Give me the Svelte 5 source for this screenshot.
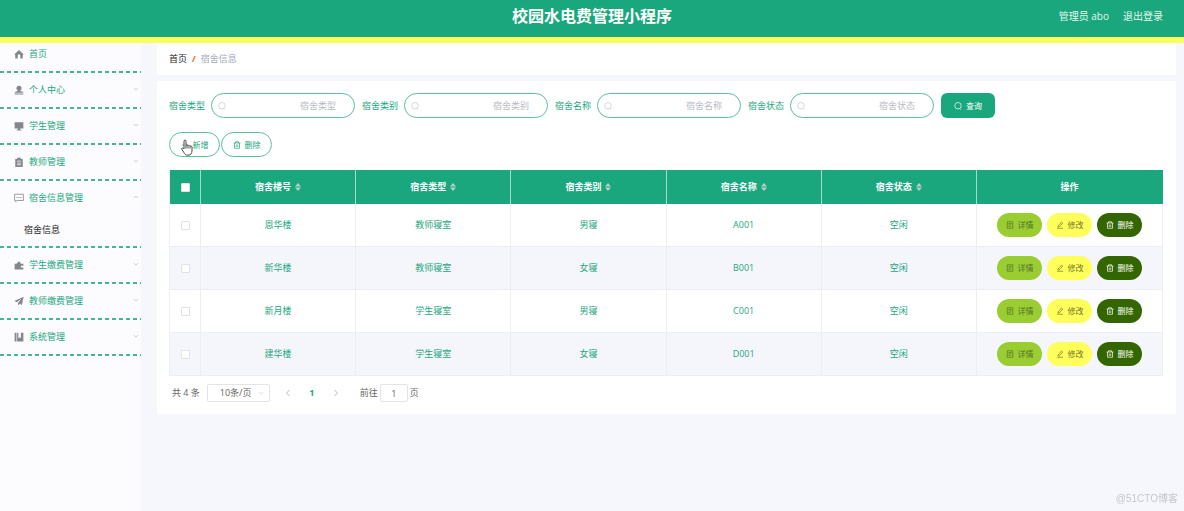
<script>
	let menus = [
		{ name: "首页", icon: "home" },
		{ name: "个人中心", icon: "user", sub: true },
		{ name: "学生管理", icon: "monitor", sub: true },
		{ name: "教师管理", icon: "clipboard", sub: true },
		{ name: "宿舍信息管理", icon: "chat", sub: true, children: ["宿舍信息"] },
		{ name: "学生缴费管理", icon: "wallet", sub: true },
		{ name: "教师缴费管理", icon: "plane", sub: true },
		{ name: "系统管理", icon: "book", sub: true },
	];

	let filters = ["宿舍类型", "宿舍类别", "宿舍名称", "宿舍状态"];
	let columns = ["宿舍楼号", "宿舍类型", "宿舍类别", "宿舍名称", "宿舍状态"];

	let rows = [
		["恩华楼", "教师寝室", "男寝", "A001", "空闲"],
		["新华楼", "教师寝室", "女寝", "B001", "空闲"],
		["新月楼", "学生寝室", "男寝", "C001", "空闲"],
		["建华楼", "学生寝室", "女寝", "D001", "空闲"],
	];

	let search = $state(["", "", "", ""]);
	let checked = $state([false, false, false, false]);
	let page = $state("1");

	function toggleAll(e) {
		checked = checked.map(() => e.target.checked);
	}
</script>

{#snippet icon(name)}
	<svg class="icon" viewBox="0 0 16 16" aria-hidden="true">
		{#if name == "home"}
			<path fill="currentColor" d="M8 1.5 0.8 8.2l1.2 1.2V15h4v-4.5a2 2 0 0 1 4 0V15h4V9.4l1.2-1.2z" />
		{:else if name == "user"}
			<circle cx="8" cy="5" r="4" fill="currentColor" />
			<path fill="currentColor" d="M6 8h4v2h2l3 1.500v1H1v-1L4 10h2zM1 13.500h14V15H1z" />
		{:else if name == "monitor"}
			<path fill="currentColor" d="M1 2h14v10H1zM6 12h4v2h2v1H4v-1h2z" />
		{:else if name == "clipboard"}
			<path fill="currentColor" fill-rule="evenodd" d="M2 3h3V1h6v2h3v13H2zM5 6v1.3h6V6zm0 3v1.3h6V9zm0 3v1.3h6V12z" />
		{:else if name == "chat"}
			<path fill="none" stroke="currentColor" stroke-width="1.3" d="M1 2h14v10H5l-2.5 2v-2H1z" />
			<path fill="currentColor" d="M4 6.5h1.6V8H4zm3.2 0h1.6V8H7.2zm3.2 0H12V8h-1.600z" />
		{:else if name == "wallet"}
			<path fill="currentColor" d="M1 6h3l4-4 3 3-1 1h5v3h-4v3h4v3H1z" />
		{:else if name == "plane"}
			<path fill="currentColor" d="M15.500 1 0.500 8l4 2L12 4l-5.500 7v4l2.500-2.500 3.500 2z" />
		{:else if name == "book"}
			<path fill="currentColor" d="M1 1h3v14H1zM5 1h2v9l2-1.500L11 10V1h4v14H5z" />
		{:else}
			<g fill="none" stroke="currentColor" stroke-width="1.4">
				{#if name == "search"}
					<circle cx="8" cy="7.500" r="6.500" /><path d="m11.500 13 2.500 2.500" />
				{:else if name == "plus"}
					<path d="M8 2v12M2 8h12" />
				{:else if name == "trash"}
					<path d="M1 4h14M5 4V1.500h6V4M3 4v10.500h10V4M6.500 7v5M9.500 7v5" />
				{:else if name == "doc"}
					<path d="M2.500 1.500h11v13h-11zM5 5h6M5 8h6M5 11h4" />
				{:else if name == "edit"}
					<path d="M4 10 11 2l2.500 2L7 11.500l-3 .5zM2 14.500h12" />
				{:else if name == "down"}
					<path d="m2 5 6 6 6-6" />
				{:else if name == "up"}
					<path d="m2 11 6-6 6 6" />
				{:else if name == "left"}
					<path d="M11 2 5 8l6 6" />
				{:else if name == "right"}
					<path d="m5 2 6 6-6 6" />
				{/if}
			</g>
		{/if}
	</svg>
{/snippet}

<header>
	<h1>校园水电费管理小程序</h1>
	<div class="account">
		<span>管理员 abo</span>
		<a href="#logout">退出登录</a>
	</div>
</header>

<div class="layout">
	<nav>
		{#each menus as menu}
			<div class="menu">
				<a class="menu-title" href="#menu">
					{@render icon(menu.icon)}
					<span>{menu.name}</span>
					{#if menu.sub}
						<i class="arrow">{@render icon(menu.children ? "up" : "down")}</i>
					{/if}
				</a>
				{#each menu.children ?? [] as child}
					<a class="child" href="#child">{child}</a>
				{/each}
			</div>
		{/each}
	</nav>

	<main>
		<div class="breadcrumb">
			<a href="#home">首页</a>
			<b>/</b>
			<span>宿舍信息</span>
		</div>

		<section>
			<form class="filters" onsubmit={(e) => e.preventDefault()}>
				{#each filters as filter, i}
					<div class="field">
						<label for="filter-{i}">{filter}</label>
						<div class="search-box">
							{@render icon("search")}
							<input id="filter-{i}" type="text" placeholder={filter} bind:value={search[i]} />
						</div>
					</div>
				{/each}
				<button class="query">{@render icon("search")}查询</button>
			</form>

			<div class="tools">
				<button class="tool">
					{@render icon("plus")}新增
					<svg class="pointer" viewBox="0 0 12 17" aria-hidden="true">
						<path d="M3 10V2.200c0-1.600 2-1.600 2 0V6.500c.4-.9 1.900-.8 2 .3.500-.8 1.900-.5 2 .5.700-.6 2-.2 2 .9v3.300c0 3-1.500 4.700-4 4.700-2.300 0-3.300-1-4.200-2.800L.9 10.300c-.6-1.200.8-1.900 1.500-.9z" />
						<path d="M5 6.500v3M7 7v2.500M9 7.500v2" />
					</svg>
				</button>
				<button class="tool">{@render icon("trash")}删除</button>
			</div>

			<table>
				<colgroup>
					<col class="col-check" />
					{#each columns as _}<col />{/each}
					<col class="col-action" />
				</colgroup>
				<thead>
					<tr>
						<th><input type="checkbox" aria-label="全选" onchange={toggleAll} /></th>
						{#each columns as column}
							<th>
								<span class="sort">
									{column}
									<svg viewBox="0 0 6 8" aria-hidden="true"><path d="M0 3.500 3 0l3 3.500zM0 4.500h6L3 8z" /></svg>
								</span>
							</th>
						{/each}
						<th>操作</th>
					</tr>
				</thead>
				<tbody>
					{#each rows as row, i}
						<tr>
							<td><input type="checkbox" aria-label={row[0]} bind:checked={checked[i]} /></td>
							{#each row as cell}
								<td>{cell}</td>
							{/each}
							<td>
								<div class="actions">
									<button class="detail">{@render icon("doc")}详情</button>
									<button class="edit">{@render icon("edit")}修改</button>
									<button class="remove">{@render icon("trash")}删除</button>
								</div>
							</td>
						</tr>
					{/each}
				</tbody>
			</table>

			<div class="pagination">
				<span>共 4 条</span>
				<div class="size">
					<select aria-label="每页条数">
						<option>10条/页</option>
						<option>20条/页</option>
					</select>
					{@render icon("down")}
				</div>
				<div class="pager">
					<button aria-label="上一页">{@render icon("left")}</button>
					<button class="current">1</button>
					<button aria-label="下一页">{@render icon("right")}</button>
				</div>
				<label>前往 <input type="text" bind:value={page} /> 页</label>
			</div>
		</section>
	</main>
</div>

<div class="watermark">@51CTO博客</div>

<style>
	:global(body) {
		background: #f6f7fc;
		color: #1ba77d;
		font-family: "Open Sans", "Noto Sans CJK SC", sans-serif;
		font-size: 9px;
		line-height: 12px;
	}
	* {
		box-sizing: border-box;
	}
	a {
		color: inherit;
		text-decoration: none;
	}
	button,
	input,
	select {
		font: inherit;
		color: inherit;
		margin: 0;
		padding: 0;
		border: none;
		outline: none;
	}
	button {
		display: flex;
		align-items: center;
		justify-content: center;
		gap: 4px;
		background: none;
		font-size: 8px;
		cursor: pointer;
		white-space: nowrap;
	}
	.icon {
		width: 8px;
		height: 8px;
		flex: none;
	}
	header {
		position: relative;
		display: grid;
		grid-template-columns: 1fr auto 1fr;
		align-items: center;
		height: 37px;
		padding: 0 21px 5px;
		background: #1ba77d;
		box-shadow: 0 6px 0 #ffff5c;
		color: #fff;
	}
	h1 {
		grid-column: 2;
		margin: 0;
		font-size: 16px;
		line-height: 20px;
		font-weight: 700;
	}
	.account {
		display: flex;
		justify-content: flex-end;
		gap: 14px;
		font-size: 10px;
		color: #e4f5ef;
	}
	.layout {
		display: flex;
		align-items: stretch;
		min-height: calc(100vh - 37px);
	}
	nav {
		width: 141px;
		flex: none;
		background: #fcfcff;
	}
	.menu {
		padding-bottom: 2px;
		background: repeating-linear-gradient(90deg, #43b592 0 4px, transparent 4px 7px) bottom / 100% 2px no-repeat;
	}
	.menu-title {
		display: flex;
		align-items: center;
		gap: 5px;
		height: 34px;
		padding: 0 2px 0 14px;
	}
	.menu-title .icon {
		width: 10px;
		height: 10px;
		color: #85878e;
	}
	.menu-title .arrow {
		display: flex;
		margin: 0 0 3px auto;
	}
	.menu-title .arrow .icon {
		width: 6px;
		height: 6px;
		color: #a5a7ae;
	}
	.child {
		display: block;
		padding: 9px 0 10px 24px;
		color: #222;
	}
	main {
		flex: 1;
		min-width: 0;
		padding: 0 8px 0 16px;
	}
	.breadcrumb {
		display: flex;
		gap: 5px;
		padding: 16px 12px 10px;
		background: #fff;
		color: #a4a8bb;
	}
	.breadcrumb a {
		color: #222;
	}
	.breadcrumb b {
		color: #e8602c;
	}
	section {
		margin-top: 6px;
		padding: 12px 13px 12px 12px;
		background: #fff;
	}
	.filters {
		display: flex;
		gap: 7px;
	}
	.field {
		display: flex;
		align-items: center;
		gap: 6px;
	}
	.search-box {
		display: flex;
		align-items: center;
		width: 144px;
		height: 25px;
		padding: 0 18px 0 6px;
		border: 1px solid #5fbea1;
		border-radius: 13px;
	}
	.search-box .icon {
		color: #c3c5cc;
	}
	.search-box input {
		flex: 1;
		min-width: 0;
		background: none;
		text-align: right;
	}
	.search-box input::placeholder {
		color: #b9bbc4;
		opacity: 1;
	}
	.query {
		width: 54px;
		height: 25px;
		border-radius: 6px;
		background: #1ba77d;
		color: #fff;
	}
	.tools {
		display: flex;
		gap: 1px;
		margin: 14px 0 13px;
	}
	.tool {
		position: relative;
		width: 51px;
		height: 25px;
		border: 1px solid #5fbea1;
		border-radius: 13px;
	}
	.pointer {
		position: absolute;
		left: 11px;
		top: 6px;
		width: 12px;
		height: 17px;
		fill: #fff;
		stroke: #444;
	}
	table {
		width: 100%;
		table-layout: fixed;
		border-collapse: separate;
		border-spacing: 0;
		border-left: 1px solid #ecedf5;
	}
	.col-check {
		width: 31px;
	}
	.col-action {
		width: 186px;
	}
	th,
	td {
		padding: 0;
		text-align: center;
		border-right: 1px solid #ecedf5;
		border-bottom: 1px solid #ecedf5;
	}
	th {
		height: 34px;
		background: #1ba77d;
		border-right-color: #a4dbca;
		border-bottom: none;
		color: #fff;
		font-weight: 700;
	}
	th:last-child {
		border-right-color: #1ba77d;
	}
	td {
		height: 43px;
	}
	tbody tr:nth-child(even) {
		background: #f5f5fc;
	}
	.sort {
		display: inline-flex;
		align-items: center;
		gap: 4px;
	}
	.sort svg {
		width: 6px;
		height: 8px;
		fill: #b9cfca;
	}
	input[type="checkbox"] {
		display: block;
		appearance: none;
		width: 9px;
		height: 9px;
		margin: 0 auto;
		border: 1px solid #e0e2ea;
		border-radius: 1px;
		background: #fff;
	}
	input[type="checkbox"]:checked {
		background: #1ba77d;
	}
	.actions {
		display: flex;
		justify-content: center;
		gap: 5px;
	}
	.actions button {
		width: 45px;
		height: 24px;
		border-radius: 12px;
	}
	.actions .detail {
		background: #9acd32;
		color: #55712b;
	}
	.actions .edit {
		background: #ffff5c;
		color: #77772e;
	}
	.actions .remove {
		background: #336600;
		color: #fff;
	}
	.pagination {
		display: flex;
		align-items: center;
		margin-top: 8px;
		padding-left: 3px;
		color: #666;
	}
	.size {
		display: flex;
		align-items: center;
		width: 63px;
		height: 18px;
		margin-left: 7px;
		padding-right: 5px;
		border: 1px solid #e2e4ea;
		border-radius: 2px;
	}
	.size select {
		flex: 1;
		min-width: 0;
		appearance: none;
		padding-left: 12px;
		background: none;
	}
	.size .icon {
		width: 6px;
		height: 6px;
		color: #c0c2ca;
	}
	.pager {
		display: flex;
		margin: 0 12px 0 6px;
	}
	.pager button {
		width: 24px;
		height: 18px;
		color: #9a9ca4;
	}
	.pager .current {
		color: #1ba77d;
		font-size: 9px;
		font-weight: 700;
	}
	.pagination label {
		display: flex;
		align-items: center;
		gap: 2px;
	}
	.pagination label input {
		width: 28px;
		height: 18px;
		border: 1px solid #e2e4ea;
		border-radius: 2px;
		text-align: center;
	}
	.watermark {
		position: fixed;
		right: 6px;
		bottom: 6px;
		color: #c4c6cc;
		font-family: "Liberation Sans", "Noto Sans CJK SC", sans-serif;
		font-size: 10px;
	}
</style>
